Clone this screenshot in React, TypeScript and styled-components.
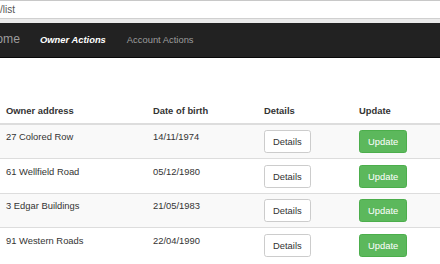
import React from "react";
import styled, { createGlobalStyle } from "styled-components";

const Global = createGlobalStyle`
  html, body { margin: 0; padding: 0; background: #fff; }
  body {
    font-family: "Liberation Sans", Arial, sans-serif;
    font-size: 9.4px;
    line-height: 1.42857;
    color: #333;
    overflow: hidden;
  }
  * { box-sizing: border-box; }
`;

const Page = styled.div`
  width: 440px;
  height: 264px;
  overflow: hidden;
`;

const AddressBar = styled.div`
  height: 23px;
  border-top: 1px solid #c8c8c8;
  background: #eaeaea;
  display: flex;
  flex-direction: column;
`;

const AddressField = styled.div`
  height: 18px;
  background: #fff;
  border-bottom: 1px solid #d0d0d0;
  display: flex;
  align-items: center;
  padding-top: 2px;
  font-size: 10px;
  color: #555;
  white-space: nowrap;
`;

const Navbar = styled.nav`
  height: 35px;
  background: #222;
  border-bottom: 1px solid #080808;
  display: flex;
  align-items: center;
  overflow: hidden;
`;

const Brand = styled.a`
  font-size: 12.2px;
  color: #9d9d9d;
  margin-left: -12.5px;
  white-space: nowrap;
`;

const NavLinks = styled.ul`
  display: flex;
  list-style: none;
  margin: 0 0 0 9.5px;
  padding: 0;
`;

const NavLink = styled.li<{ $active?: boolean }>`
  padding: 0 10.5px;
  white-space: nowrap;
  color: ${(p) => (p.$active ? "#fff" : "#9d9d9d")};
  font-weight: ${(p) => (p.$active ? "bold" : "normal")};
  font-style: ${(p) => (p.$active ? "italic" : "normal")};
`;

const Table = styled.table`
  margin-top: 40.8px;
  width: 460px;
  border-collapse: collapse;
  border-spacing: 0;
  table-layout: fixed;
`;

const Th = styled.th<{ $w: number }>`
  width: ${(p) => p.$w}px;
  text-align: left;
  vertical-align: bottom;
  padding: 5.3px 6px;
  border-bottom: 2px solid #ddd;
  font-weight: bold;
  white-space: nowrap;
`;

const Tr = styled.tr<{ $striped: boolean }>`
  background: ${(p) => (p.$striped ? "#f9f9f9" : "#fff")};
`;

const Td = styled.td`
  vertical-align: top;
  padding: 5.25px 6px;
  border-top: 1px solid #ddd;
  white-space: nowrap;
`;

const Button = styled.button<{ $variant: "default" | "success" }>`
  font-family: inherit;
  font-size: 9.4px;
  line-height: 13.4px;
  height: 23px;
  padding: 4px 8px;
  border-radius: 2.7px;
  cursor: pointer;
  border: 1px solid ${(p) => (p.$variant === "success" ? "#4cae4c" : "#ccc")};
  background: ${(p) => (p.$variant === "success" ? "#5cb85c" : "#fff")};
  color: ${(p) => (p.$variant === "success" ? "#fff" : "#333")};
  display: block;
`;

const owners = [
  { address: "27 Colored Row", dob: "14/11/1974" },
  { address: "61 Wellfield Road", dob: "05/12/1980" },
  { address: "3 Edgar Buildings", dob: "21/05/1983" },
  { address: "91 Western Roads", dob: "22/04/1990" },
];

export default function App() {
  return (
    <Page>
      <Global />
      <AddressBar>
        <AddressField>/list</AddressField>
      </AddressBar>
      <Navbar>
        <Brand>Home</Brand>
        <NavLinks>
          <NavLink $active>Owner Actions</NavLink>
          <NavLink>Account Actions</NavLink>
        </NavLinks>
      </Navbar>
      <Table>
        <thead>
          <tr>
            <Th $w={147}>Owner address</Th>
            <Th $w={111}>Date of birth</Th>
            <Th $w={95}>Details</Th>
            <Th $w={107}>Update</Th>
          </tr>
        </thead>
        <tbody>
          {owners.map((o, i) => (
            <Tr key={o.address} $striped={i % 2 === 0}>
              <Td>{o.address}</Td>
              <Td>{o.dob}</Td>
              <Td>
                <Button $variant="default">Details</Button>
              </Td>
              <Td>
                <Button $variant="success">Update</Button>
              </Td>
            </Tr>
          ))}
        </tbody>
      </Table>
    </Page>
  );
}
